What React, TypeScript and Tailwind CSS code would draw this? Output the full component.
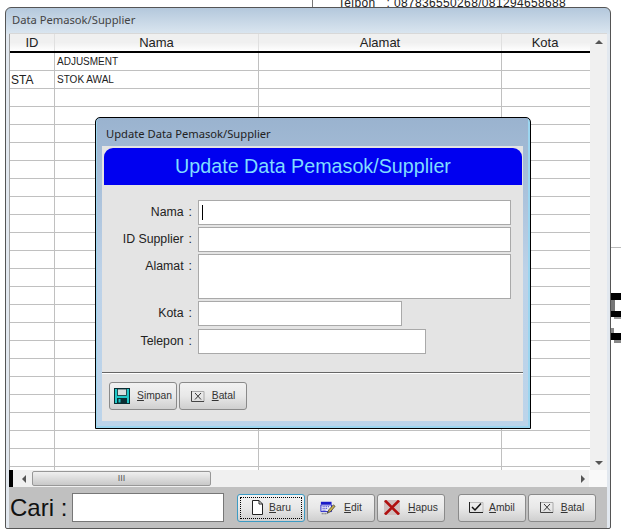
import type { ReactNode } from "react";

const FONT = "font-['Liberation_Sans',Arial,sans-serif]";
const TITLE_FONT = "font-['Noto_Sans',sans-serif]";

const rows = Array.from({ length: 23 }, (_, i) => i);

function SaveIcon() {
  return (
    <svg width="16" height="16" viewBox="0 0 16 16">
      <rect x="0.5" y="0.5" width="15" height="15" fill="#22c8c8" stroke="#0b2e33" />
      <rect x="3.5" y="1" width="9" height="6.5" fill="#d8dede" stroke="#0b2e33" strokeWidth="0.8" />
      <rect x="3" y="10" width="10" height="5.5" fill="#0b2e33" />
      <rect x="4.5" y="11" width="2" height="3.5" fill="#22c8c8" />
    </svg>
  );
}

function CrossBoxIcon() {
  return (
    <svg width="14" height="13" viewBox="0 0 14 13" fill="none">
      <path d="M1 1.5H13V11.5" stroke="#aaa" />
      <path d="M0.5 1V11.5H13" stroke="#444" />
      <path d="M4 3L10 9.5M10 3L4 9.5" stroke="#333" />
    </svg>
  );
}

function CheckBoxIcon() {
  return (
    <svg width="15" height="13" viewBox="0 0 15 13" fill="none">
      <path d="M1 1.5H14V11.5" stroke="#bbb" />
      <path d="M0.5 1V11.5H14" stroke="#222" />
      <path d="M3 6L6 9L12 2.5" stroke="#111" strokeWidth="1.5" />
    </svg>
  );
}

function PageIcon() {
  return (
    <svg width="13" height="15" viewBox="0 0 13 15" fill="none">
      <path d="M1.5 0.5H8L11.5 4V14.5H1.5Z" fill="#fff" stroke="#222" />
      <path d="M8 0.5V4H11.5" stroke="#222" />
    </svg>
  );
}

function EditIcon() {
  return (
    <svg width="16" height="16" viewBox="0 0 18 16" fill="none">
      <rect x="1" y="1" width="12" height="3" fill="#1a1ac8" />
      <path d="M1 4.5H13V12H1Z" fill="#e8e8f4" stroke="#1a1ac8" />
      <path d="M3 6.5H11M3 8.5H9M3 10.5H7" stroke="#1a1ac8" strokeDasharray="1 1" />
      <path d="M2 14.5H8" stroke="#333" strokeDasharray="1 1" />
      <path d="M8 14L10 10L15 4.5L17 6L12 12Z" fill="#c9b04a" stroke="#333" strokeWidth="0.8" />
    </svg>
  );
}

function DeleteIcon() {
  return (
    <svg width="16" height="15" viewBox="0 0 16 15">
      <rect width="16" height="15" fill="#cfc0c0" />
      <path d="M1 0.5L15 14.5M15 0.5L1 14.5" stroke="#b01010" strokeWidth="2.6" />
    </svg>
  );
}

function WinButton({
  icon,
  hot,
  rest,
  gap,
  focused,
}: {
  icon: ReactNode;
  hot: string;
  rest: string;
  gap: string;
  focused?: boolean;
}) {
  return (
    <div
      className={`w-[68px] h-[28px] shrink-0 rounded-[3px] border flex items-center justify-center bg-gradient-to-b from-[#f2f2f2] via-[#e8e8e8] to-[#cfcfcf] text-[10.3px] text-[#333] ${
        focused ? "border-[#3c9bc4] p-[2px]" : "border-[#8a8a8a]"
      }`}
    >
      <div
        className={`flex items-center justify-center w-full h-full ${gap} ${
          focused ? "border border-dotted border-black" : ""
        }`}
      >
        {icon}
        <span>
          <span className="underline">{hot}</span>
          {rest}
        </span>
      </div>
    </div>
  );
}

function Field({ label, width, height, cursor }: { label: string; width: string; height: string; cursor?: boolean }) {
  return (
    <div className="flex items-start">
      <div className="w-[90px] pt-[4px] flex text-[12.3px] text-[#222] leading-[16px]">
        <span className="ml-auto whitespace-nowrap">{label}</span>
        <span className="ml-[5px]">:</span>
      </div>
      <div className={`ml-[6px] ${width} ${height} bg-white border border-[#a9a9a9] flex items-center px-[3px]`}>
        {cursor && <div className="w-px h-[15px] bg-black" />}
      </div>
    </div>
  );
}

export default function App() {
  return (
    <div className={`${FONT} relative w-[621px] h-[531px] overflow-hidden bg-white`}>
      {/* whatever sits behind the window */}
      <div className="absolute left-[338px] top-[-4px] text-[12px] leading-[14px] text-[#222] tracking-[0.35px] whitespace-nowrap">
        Telpon&nbsp;&nbsp;&nbsp;: 087836550268/081294658688
      </div>
      <div className="absolute left-[312px] top-0 w-px h-[8px] bg-[#777]" />
      <div className="absolute left-[611px] top-[247px] w-[10px] h-px bg-[#bbb]" />
      <div className="absolute left-[611px] top-[293px] w-[10px] flex flex-col">
        <div className="w-[10px] h-[7px] bg-black" />
        <div className="w-[4px] h-[11px] bg-[#777]" />
        <div className="w-[10px] h-[6px] bg-black" />
        <div className="ml-[3px] w-[7px] h-[2px] bg-[#999]" />
        <div className="h-[9px]" />
        <div className="w-[3px] h-[5px] bg-[#888]" />
        <div className="w-[10px] h-[7px] bg-black" />
        <div className="ml-[3px] w-[7px] h-[3px] bg-[#888]" />
      </div>

      {/* Data window */}
      <div className="absolute left-[5px] top-[7px] w-[606px] h-[522px] rounded-t-[6px] rounded-b-[2px] border border-[#555] flex flex-col bg-[#e2e8ef] bg-gradient-to-b from-[#b4c8dc] to-[#dbe6f0] bg-[length:100%_26px] bg-no-repeat">
        <div className={`${TITLE_FONT} h-[25px] shrink-0 flex items-center pl-[6px] text-[11.2px] text-[#444]`}>
          Data Pemasok/Supplier
        </div>
        <div className="flex-1 mx-[3px] flex flex-col bg-[#c0c0c0] min-h-0">
          <div className="flex-1 flex min-h-0 bg-white border-t border-[#d8d8d8]">
            <div className="flex-1 min-w-0 flex flex-col overflow-hidden border-l border-[#a0a0a0]">
              <div className="flex h-[19px] shrink-0 border-b-2 border-black text-[13px] leading-[17px] text-[#222] text-center bg-gradient-to-b from-[#f0f0f0] via-[#f0f0f0] to-white">
                <div className="w-[45px] border-r border-[#e0e0e0]">ID</div>
                <div className="w-[204px] border-r border-[#e0e0e0]">Nama</div>
                <div className="w-[243px] border-r border-[#e0e0e0]">Alamat</div>
                <div className="w-[86px]">Kota</div>
              </div>
              {rows.map((i) => (
                <div key={i} className="flex h-[18px] shrink-0 border-b border-[#c0c0c0] text-[#222]">
                  <div className="w-[45px] border-r border-[#c0c0c0] pl-px text-[12px] leading-[19px]">
                    {i === 1 ? "STA" : ""}
                  </div>
                  <div className="w-[204px] border-r border-[#c0c0c0] pl-[2px] text-[10px] leading-[17px]">
                    {i === 0 ? "ADJUSMENT" : i === 1 ? "STOK AWAL" : ""}
                  </div>
                  <div className="w-[243px] border-r border-[#c0c0c0]" />
                  <div className="w-[86px]" />
                </div>
              ))}
              <div className="flex flex-1">
                <div className="w-[45px] border-r border-[#c0c0c0]" />
                <div className="w-[204px] border-r border-[#c0c0c0]" />
                <div className="w-[243px] border-r border-[#c0c0c0]" />
              </div>
            </div>
            {/* vertical scrollbar */}
            <div className="w-[17px] shrink-0 bg-[#f0f0f0] flex flex-col items-center justify-between pt-[6px] pb-[5px]">
              <div className="w-0 h-0 border-x-[4px] border-x-transparent border-b-[4px] border-b-[#555]" />
              <div className="w-0 h-0 border-x-[4px] border-x-transparent border-t-[4px] border-t-[#555]" />
            </div>
          </div>

          {/* horizontal scrollbar */}
          <div className="h-[17px] shrink-0 flex bg-[#f0f0f0] items-center">
            <div className="w-[4px] h-full bg-black" />
            <div className="w-[15px] flex justify-end pr-[2px]">
              <div className="w-0 h-0 border-y-[4px] border-y-transparent border-r-[4px] border-r-[#555]" />
            </div>
            <div className="ml-[4px] w-[179px] h-[15px] rounded-[2px] border border-[#979797] bg-gradient-to-b from-[#f0f0f0] to-[#c8c8c8] flex items-center justify-center text-[9px] leading-none text-[#555]">
              III
            </div>
            <div className="flex-1" />
            <div className="w-0 h-0 border-y-[4px] border-y-transparent border-l-[4px] border-l-[#555] mr-[4px]" />
            <div className="w-[18px] h-full bg-[#f9f9f9]" />
          </div>

          {/* footer */}
          <div className="h-[41px] shrink-0 flex items-center pl-[1px]">
            <div className="text-[24px] leading-none text-[#111] w-[62px] whitespace-nowrap">Cari :</div>
            <div className="w-[152px] h-[29px] bg-white border border-[#777]" />
            <div className="ml-[13px] flex gap-[2px]">
              <WinButton icon={<PageIcon />} hot="B" rest="aru" gap="gap-[5px]" focused />
              <WinButton icon={<EditIcon />} hot="E" rest="dit" gap="gap-[8px]" />
              <WinButton icon={<DeleteIcon />} hot="H" rest="apus" gap="gap-[8px]" />
            </div>
            <div className="ml-[13px] flex gap-[2px]">
              <WinButton icon={<CheckBoxIcon />} hot="A" rest="mbil" gap="gap-[5px]" />
              <WinButton icon={<CrossBoxIcon />} hot="B" rest="atal" gap="gap-[7px]" />
            </div>
          </div>
        </div>
      </div>

      {/* Update dialog */}
      <div className="absolute left-[95px] top-[117px] w-[436px] h-[312px] rounded-t-[5px] border border-black flex flex-col bg-[#bcd4ea] bg-gradient-to-b from-[#9ab3cf] via-[#bdd2e8] to-[#bcd4ea] shadow-[inset_-2px_-2px_0_#9cd6f0,inset_1px_0_0_#9cd6f0]">
        <div className={`${TITLE_FONT} h-[28px] shrink-0 flex items-center pl-[10px] pt-[5px] text-[11.2px] text-[#222]`}>
          Update Data Pemasok/Supplier
        </div>
        <div className="flex-1 ml-[6px] mr-[7px] mb-[7px] flex flex-col bg-[#e4e4e4]">
          <div className="ml-[2px] mr-px mt-[2px] h-[37px] shrink-0 bg-[#0000f0] rounded-t-[9px] flex items-center justify-center text-[19.7px] text-[#7fdcff]">
            Update Data Pemasok/Supplier
          </div>
          <div className="pt-[15px] flex flex-col gap-[2px]">
            <Field label="Nama" width="w-[313px]" height="h-[25px]" cursor />
            <Field label="ID Supplier" width="w-[313px]" height="h-[25px]" />
            <Field label="Alamat" width="w-[313px]" height="h-[45px]" />
            <Field label="Kota" width="w-[204px]" height="h-[25px]" />
            <div className="mt-px">
              <Field label="Telepon" width="w-[228px]" height="h-[25px]" />
            </div>
          </div>
          <div className="mt-[18px] border-t border-[#666] shadow-[0_1px_0_#fff]" />
          <div className="pt-[9px] pl-[7px] flex gap-[2px]">
            <WinButton icon={<SaveIcon />} hot="S" rest="impan" gap="gap-[7px]" />
            <WinButton icon={<CrossBoxIcon />} hot="B" rest="atal" gap="gap-[7px]" />
          </div>
        </div>
      </div>
    </div>
  );
}
